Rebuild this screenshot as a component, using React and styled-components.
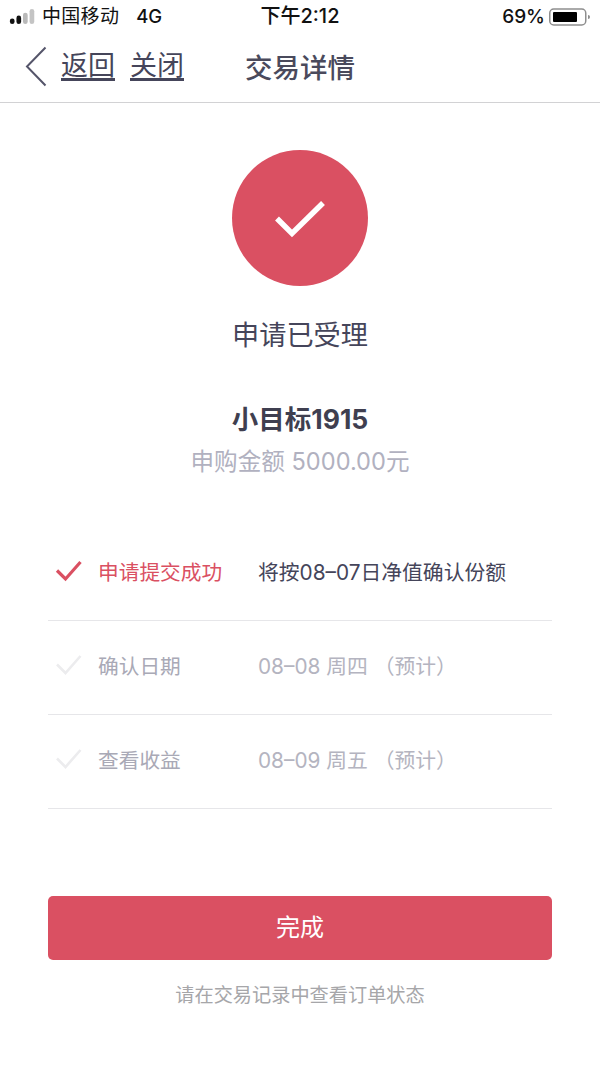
import React from "react";
import styled, { createGlobalStyle } from "styled-components";

const Global = createGlobalStyle`
  html, body { margin: 0; padding: 0; background: #fff; }
  body { font-family: "Inter", "Noto Sans CJK SC", sans-serif; }
`;
const Page = styled.div`
  width: 600px; height: 1067px; background: #fff; overflow: hidden;
  display: flex; flex-direction: column; align-items: center;
`;
const StatusBar = styled.div`
  width: 100%; height: 33px; box-sizing: border-box; padding: 0 9px 0 9px;
  display: grid; grid-template-columns: 1fr auto 1fr; align-items: center;
  color: #111; line-height: 33px;
`;
const StatusLeft = styled.div`display: flex; align-items: center; gap: 5px;`;
const Carrier = styled.span`font-size: 19px; letter-spacing: 0.3px;`;
const Net = styled.span`margin-left: 12px; font-size: 18.5px; font-weight: 500;`;
const Clock = styled.span`font-size: 20px; font-weight: 500;`;
const StatusRight = styled.div`display: flex; justify-content: flex-end; align-items: center; gap: 4px;`;
const Percent = styled.span`font-size: 19px; font-weight: 500;`;
const NavBar = styled.div`
  width: 100%; height: 70px; box-sizing: border-box; border-bottom: 1.5px solid #d2d2d4;
  display: flex; align-items: center; padding: 0 0 3px 25px; color: #45455a;
`;
const BackIcon = styled.svg`width: 22px; height: 42px; flex: none; margin: 2px 14px 0 0;`;
const NavLink = styled.span`
  font-size: 27px; line-height: 32px; margin-right: 15px;
  text-decoration: underline; text-underline-offset: 3px; text-decoration-thickness: 2.5px;
`;
const NavTitle = styled.span`font-size: 27.5px; font-weight: 500; margin-left: 46px; color: #4a4a5c;`;
const Circle = styled.div`
  width: 136px; height: 136px; box-sizing: border-box; padding-top: 3px; border-radius: 50%;
  background: #da5062; margin-top: 47px;
  display: flex; align-items: center; justify-content: center;
`;
const StatusTitle = styled.h1`
  margin: 32px 0 0; font-size: 27.2px; line-height: 36px; font-weight: 400; color: #45455a;
`;
const Product = styled.div`
  margin-top: 46px; font-size: 26.5px; line-height: 38px; font-weight: 700; color: #3f3f50;
`;
const Amount = styled.div`
  margin-top: 7px; font-size: 23.6px; line-height: 34px; color: #b1b1c0;
`;
const Steps = styled.div`width: 504px; margin-top: 48px; display: flex; flex-direction: column;`;
const Step = styled.div`
  height: 94px; box-sizing: border-box; border-bottom: 1.5px solid #e6e6e9;
  display: flex; align-items: center; padding: 0 0 6px 7px;
`;
const StepCheck = styled.svg`width: 28px; height: 24px; flex: none; margin-right: 15px;`;
const StepLabel = styled.span`
  width: 160px; flex: none; font-size: 20.7px; color: ${(p) => (p.$active ? "#da5062" : "#a9a9b6")};
`;
const StepValue = styled.span`
  font-size: 20.8px; color: ${(p) => (p.$active ? "#45455a" : "#b4b4c0")}; white-space: pre;
`;
const Done = styled.button`
  width: 504px; height: 64px; margin-top: 87px; border: 0; border-radius: 5px; background: #da5062;
  color: #fff; font-family: inherit; font-size: 24px; padding: 0 0 5px;
`;
const Note = styled.div`margin-top: 20px; font-size: 19.2px; line-height: 30px; color: #a6a6a9;`;

const Check = ({ color, sw }) => (
  <StepCheck viewBox="0 0 28 24">
    <path d="M2 11.5 L10.5 20 L25.5 3" fill="none" stroke={color} strokeWidth={sw} />
  </StepCheck>
);

const steps = [
  { label: "申请提交成功", value: "将按08–07日净值确认份额", active: true },
  { label: "确认日期", value: "08–08 周四 （预计）" },
  { label: "查看收益", value: "08–09 周五 （预计）" },
];

export default function App() {
  return (
    <Page>
      <Global />
      <StatusBar>
        <StatusLeft>
          <svg width="28" height="15" viewBox="0 0 28 16">
            <rect x="0" y="10" width="5" height="6" rx="2.5" fill="#111" />
            <rect x="7" y="7" width="5" height="9" rx="2.5" fill="#111" />
            <rect x="14" y="4" width="5" height="12" rx="2.5" fill="#b9b9b9" />
            <rect x="21" y="0" width="5" height="16" rx="2.5" fill="#c4c4c4" />
          </svg>
          <Carrier>中国移动</Carrier>
          <Net>4G</Net>
        </StatusLeft>
        <Clock>下午2:12</Clock>
        <StatusRight>
          <Percent>69%</Percent>
          <svg width="42" height="18" viewBox="0 0 42 18">
            <rect x="0.75" y="1" width="36" height="16" rx="4" fill="none" stroke="#8e8e8e" strokeWidth="1.5" />
            <rect x="4" y="4" width="24" height="10" rx="1" fill="#000" />
            <path d="M39 7 a2 2 0 0 1 0 4 Z" fill="#8e8e8e" />
          </svg>
        </StatusRight>
      </StatusBar>
      <NavBar>
        <BackIcon viewBox="0 0 22 42">
          <path d="M20.5 1.5 L2 20.5 L20.5 39.5" fill="none" stroke="#55556a" strokeWidth="2" />
        </BackIcon>
        <NavLink>返回</NavLink>
        <NavLink>关闭</NavLink>
        <NavTitle>交易详情</NavTitle>
      </NavBar>
      <Circle>
        <svg width="52" height="40" viewBox="0 0 52 40">
          <path d="M3 18.5 L18 33.5 L49 3" fill="none" stroke="#fff" strokeWidth="5.5" />
        </svg>
      </Circle>
      <StatusTitle>申请已受理</StatusTitle>
      <Product>小目标1915</Product>
      <Amount>申购金额 5000.00元</Amount>
      <Steps>
        {steps.map((s, i) => (
          <Step key={i}>
            <Check color={s.active ? "#da5062" : "#ececee"} sw={s.active ? 3.2 : 2.6} />
            <StepLabel $active={s.active}>{s.label}</StepLabel>
            <StepValue $active={s.active}>{s.value}</StepValue>
          </Step>
        ))}
      </Steps>
      <Done>完成</Done>
      <Note>请在交易记录中查看订单状态</Note>
    </Page>
  );
}
